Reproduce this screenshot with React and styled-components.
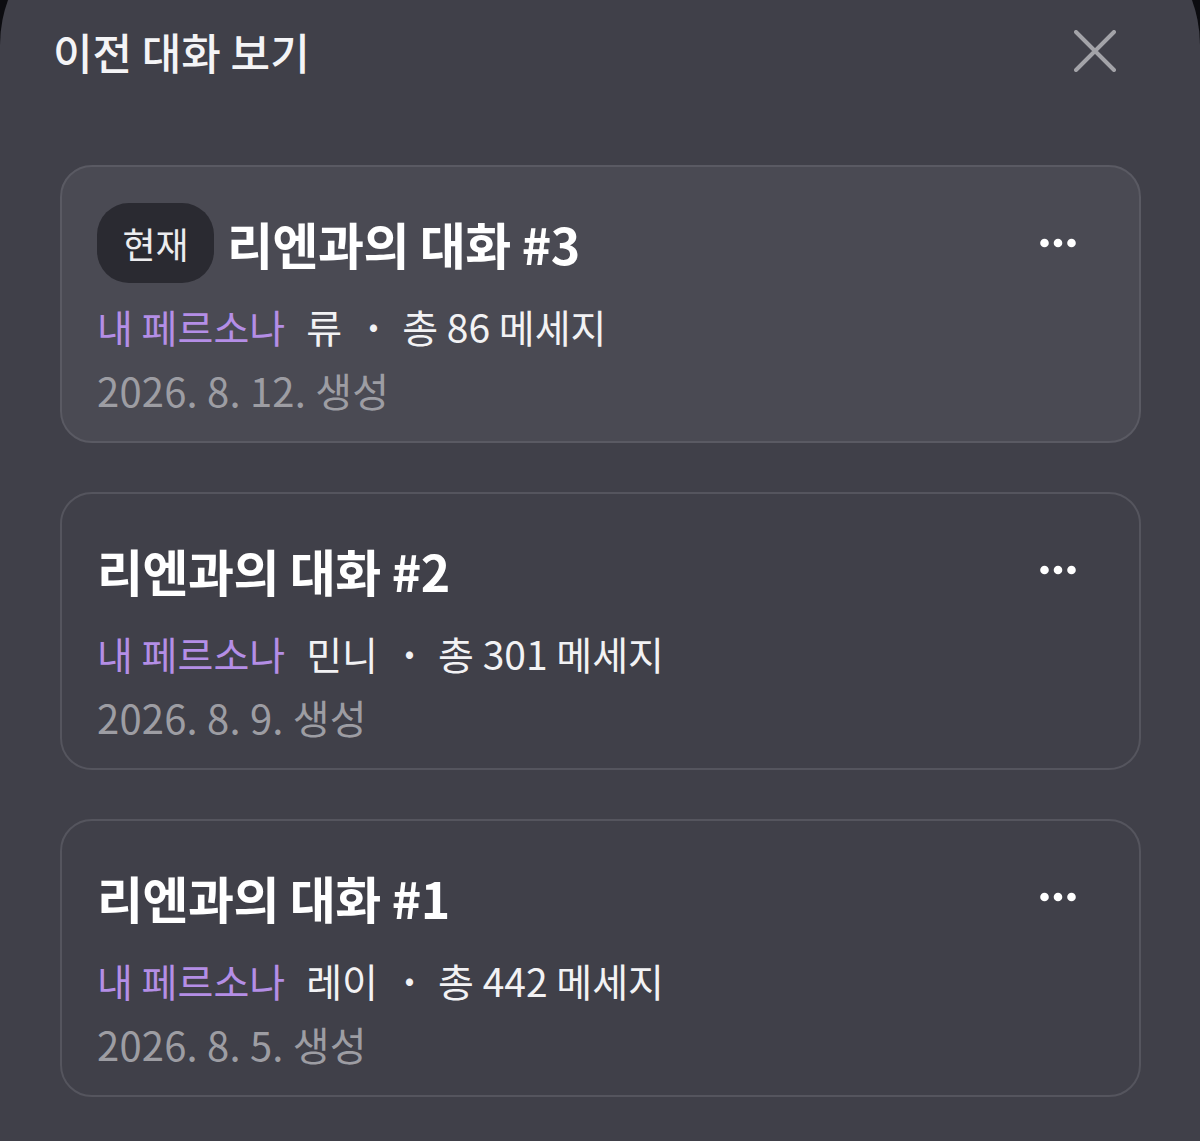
import React from 'react'
import styled, { createGlobalStyle } from 'styled-components'

const conversations = [
    { id: 3, current: true, persona: '류', count: 86, date: '2026. 8. 12.' },
    { id: 2, current: false, persona: '민니', count: 301, date: '2026. 8. 9.' },
    { id: 1, current: false, persona: '레이', count: 442, date: '2026. 8. 5.' },
]

export default function App() {
    return (
        <>
            <GlobalStyle />
            <Sheet>
                <Header>
                    <Heading>이전 대화 보기</Heading>
                    <CloseButton aria-label="닫기">
                        <svg width="42" height="42" viewBox="0 0 42 42" fill="none">
                            <path d="M2 2L40 40M40 2L2 40" stroke="#a3a3a8" strokeWidth="4" strokeLinecap="round" />
                        </svg>
                    </CloseButton>
                </Header>

                <List>
                    {conversations.map(c => (
                        <Card key={c.id} $active={c.current}>
                            <TitleRow>
                                <TitleGroup>
                                    {c.current && <Badge>현재</Badge>}
                                    <Title>리엔과의 대화 #{c.id}</Title>
                                </TitleGroup>
                                <MoreButton aria-label="더보기">
                                    <svg width="36" height="10" viewBox="0 0 36 10">
                                        <circle cx="4.5" cy="5" r="4.3" fill="#fff" />
                                        <circle cx="18" cy="5" r="4.3" fill="#fff" />
                                        <circle cx="31.5" cy="5" r="4.3" fill="#fff" />
                                    </svg>
                                </MoreButton>
                            </TitleRow>
                            <Meta>
                                <Persona>내 페르소나</Persona>
                                <span>{c.persona}</span>
                                <Dot>·</Dot>
                                <span>총 {c.count} 메세지</span>
                            </Meta>
                            <DateLine>{c.date} 생성</DateLine>
                        </Card>
                    ))}
                </List>
            </Sheet>
        </>
    )
}

const GlobalStyle = createGlobalStyle`
    html, body {
        margin: 0;
        padding: 0;
        background: #0c0c10;
        overflow: hidden;
    }
    body {
        font-family: "Noto Sans CJK KR", "Noto Sans", sans-serif;
        -webkit-font-smoothing: antialiased;
    }
    button {
        font: inherit;
    }
`
const Sheet = styled.div`
    margin-top: -85px;
    padding-top: 85px;
    height: 1141px;
    background: #404049;
    border-radius: 130px 130px 0 0;
    display: flex;
    flex-direction: column;
`
const Header = styled.div`
    height: 102px;
    display: flex;
    align-items: center;
    justify-content: space-between;
    padding: 0 84px 0 53px;
`
const Heading = styled.h1`
    margin: 0;
    font-size: 43px;
    font-weight: 500;
    color: #f4f4f6;
`
const CloseButton = styled.button`
    width: 42px;
    height: 42px;
    padding: 0;
    border: 0;
    background: none;
    display: flex;
    align-items: center;
    justify-content: center;
`
const List = styled.div`
    margin-top: 63px;
    padding: 0 59px 0 60px;
    display: flex;
    flex-direction: column;
    gap: 49px;
`
const Card = styled.div`
    height: 278px;
    box-sizing: border-box;
    padding: 36px 35px 31px;
    border-radius: 32px;
    border: 2px solid ${p => p.$active ? '#5a5a63' : '#55555e'};
    background: ${p => p.$active ? '#4a4a53' : '#404049'};
    display: flex;
    flex-direction: column;
`
const TitleRow = styled.div`
    height: 80px;
    display: flex;
    align-items: center;
    justify-content: space-between;
`
const TitleGroup = styled.div`
    display: flex;
    align-items: center;
    gap: 13px;
`
const Badge = styled.span`
    height: 80px;
    width: 117px;
    border-radius: 32px;
    background: #2a2a31;
    color: #ececef;
    font-size: 36px;
    font-weight: 400;
    display: flex;
    align-items: center;
    justify-content: center;
`
const Title = styled.h2`
    margin: 0;
    font-size: 50px;
    font-weight: 700;
    letter-spacing: -0.5px;
    color: #ffffff;
`
const MoreButton = styled.button`
    width: 92px;
    height: 80px;
    padding: 0;
    border: 0;
    background: none;
    display: flex;
    align-items: center;
    justify-content: center;
`
const Meta = styled.div`
    margin-top: 21px;
    height: 44px;
    display: flex;
    align-items: center;
    gap: 21px;
    font-size: 39px;
    color: #f2f2f4;
`
const Persona = styled.span`
    color: #b48ee6;
`
const Dot = styled.span`
    font-weight: 700;
    margin: 0 -4px 0 -1px;
`
const DateLine = styled.div`
    margin-top: 20px;
    height: 44px;
    display: flex;
    align-items: center;
    font-size: 40px;
    letter-spacing: 0.2px;
    color: #9d9da3;
`
